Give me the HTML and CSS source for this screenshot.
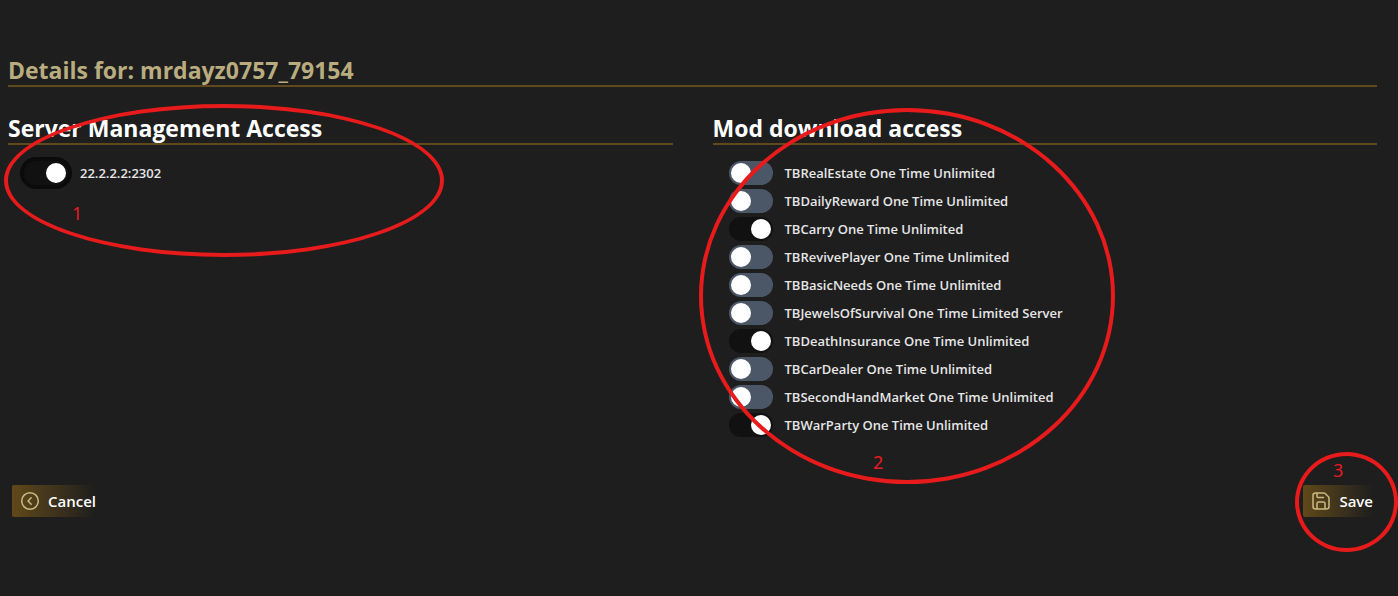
FILE: index.html
```html
<!DOCTYPE html>
<html lang="en">
<head>
<meta charset="utf-8">
<meta name="viewport" content="width=device-width, initial-scale=1">
<title>User details</title>
<link rel="stylesheet" href="styles.css">
</head>
<body>
<main class="page">
  <h1 class="title">Details for: mrdayz0757_79154</h1>
  <form class="form">
    <div class="columns">
      <section class="column">
        <h2 class="heading">Server Management Access</h2>
        <ul class="servers">
          <li><label class="option option-server"><input class="switch switch-ringed" type="checkbox" checked>22.2.2.2:2302</label></li>
        </ul>
      </section>
      <section class="column">
        <h2 class="heading">Mod download access</h2>
        <ul class="mods">
          <li><label class="option"><input class="switch" type="checkbox">TBRealEstate One Time Unlimited</label></li>
          <li><label class="option"><input class="switch" type="checkbox">TBDailyReward One Time Unlimited</label></li>
          <li><label class="option"><input class="switch" type="checkbox" checked>TBCarry One Time Unlimited</label></li>
          <li><label class="option"><input class="switch" type="checkbox">TBRevivePlayer One Time Unlimited</label></li>
          <li><label class="option"><input class="switch" type="checkbox">TBBasicNeeds One Time Unlimited</label></li>
          <li><label class="option"><input class="switch" type="checkbox">TBJewelsOfSurvival One Time Limited Server</label></li>
          <li><label class="option"><input class="switch" type="checkbox" checked>TBDeathInsurance One Time Unlimited</label></li>
          <li><label class="option"><input class="switch" type="checkbox">TBCarDealer One Time Unlimited</label></li>
          <li><label class="option"><input class="switch" type="checkbox">TBSecondHandMarket One Time Unlimited</label></li>
          <li><label class="option"><input class="switch" type="checkbox" checked>TBWarParty One Time Unlimited</label></li>
        </ul>
      </section>
    </div>
    <div class="actions">
      <button class="button" type="button">
        <svg class="icon" viewBox="0 0 20 20" aria-hidden="true"><circle cx="10" cy="10" r="8.3"/><path d="M11.200 6.800 8 10l3.200 3.200"/></svg>
        Cancel
      </button>
      <button class="button" type="submit">
        <svg class="icon" viewBox="0 0 20 20" aria-hidden="true"><path d="M4.500 2h8.300a2 2 0 0 1 1.400.6l3.200 3.200a2 2 0 0 1 .6 1.400v8.300a2.500 2.500 0 0 1-2.500 2.500h-11A2.500 2.500 0 0 1 2 15.500v-11A2.500 2.500 0 0 1 4.500 2zM6 2v3.500a1 1 0 0 0 1 1h5.500M6 18v-5.500a1.500 1.500 0 0 1 1.500-1.500h5a1.500 1.500 0 0 1 1.500 1.500V18"/></svg>
        Save
      </button>
    </div>
  </form>
</main>
<div class="mark mark-servers"><span class="mark-number">1</span></div>
<div class="mark mark-mods"><span class="mark-number">2</span></div>
<div class="mark mark-save"><span class="mark-number">3</span></div>
</body>
</html>
```

FILE: styles.css
```css
* {
  box-sizing: border-box;
}

body {
  margin: 0;
  position: relative;
  min-height: 100vh;
  overflow-x: hidden;
  background: #1e1e1e;
  color: #fff;
  font-family: "Segoe UI", "Open Sans", "Noto Sans", sans-serif;
}

.page {
  padding: 53px 21px 24px 8px;
}

.title,
.heading {
  margin: 0;
  padding-top: 2px;
  border-bottom: 2px solid #60491a;
  font-size: 23px;
  line-height: 30px;
  font-weight: 700;
}

.title {
  color: #b9ad80;
}

.columns {
  display: grid;
  grid-template-columns: 1fr 1fr;
  gap: 40px;
  margin-top: 24px;
}

.servers,
.mods {
  display: grid;
  gap: 4px;
  margin: 0;
  padding: 12px;
  list-style: none;
}

.mods {
  padding: 16px 16px 0;
}

.option {
  display: flex;
  align-items: center;
  gap: 12px;
  color: #e6e6e6;
  font-size: 13px;
  line-height: 20px;
  font-weight: 600;
}

.option-server {
  gap: 8px;
}

.switch {
  appearance: none;
  display: flex;
  flex: none;
  width: 44px;
  height: 24px;
  margin: 0;
  padding: 2px;
  border-radius: 16px;
  background: #4b5666;
}

.switch::before {
  content: "";
  width: 20px;
  height: 20px;
  border-radius: 50%;
  background: #fff;
}

.switch:checked {
  justify-content: flex-end;
  background: #111;
}

.switch-ringed {
  width: 52px;
  height: 32px;
  border: 4px solid #0b0b0b;
}

.actions {
  display: flex;
  justify-content: space-between;
  margin-top: 48px;
  padding: 0 4px;
}

.button {
  display: flex;
  align-items: center;
  gap: 8px;
  height: 32px;
  padding: 0 0 0 8px;
  border: 0;
  border-radius: 2px;
  background: linear-gradient(to right, #60491a, #1e1e1e);
  color: #fff;
  font-family: inherit;
  font-size: 15px;
  font-weight: 600;
}

.icon {
  width: 20px;
  height: 20px;
  fill: none;
  stroke: #cbb983;
  stroke-width: 1.5;
  stroke-linecap: round;
  stroke-linejoin: round;
}

.mark {
  position: absolute;
  border: 4px solid #e71b1b;
  border-radius: 50%;
  color: #e71b24;
  font-family: "Segoe UI", "Noto Sans", sans-serif;
  font-size: 18px;
  line-height: 24px;
  pointer-events: none;
}

.mark-number {
  position: absolute;
}

.mark-servers {
  left: 4px;
  top: 104px;
  width: 440px;
  height: 153px;
}

.mark-servers .mark-number {
  left: 64px;
  top: 93px;
}

.mark-mods {
  left: 699px;
  top: 108px;
  width: 416px;
  height: 376px;
}

.mark-mods .mark-number {
  left: 170px;
  top: 338px;
}

.mark-save {
  right: 0;
  top: 452px;
  width: 103px;
  height: 100px;
}

.mark-save .mark-number {
  left: 34px;
  top: 2px;
}
```
